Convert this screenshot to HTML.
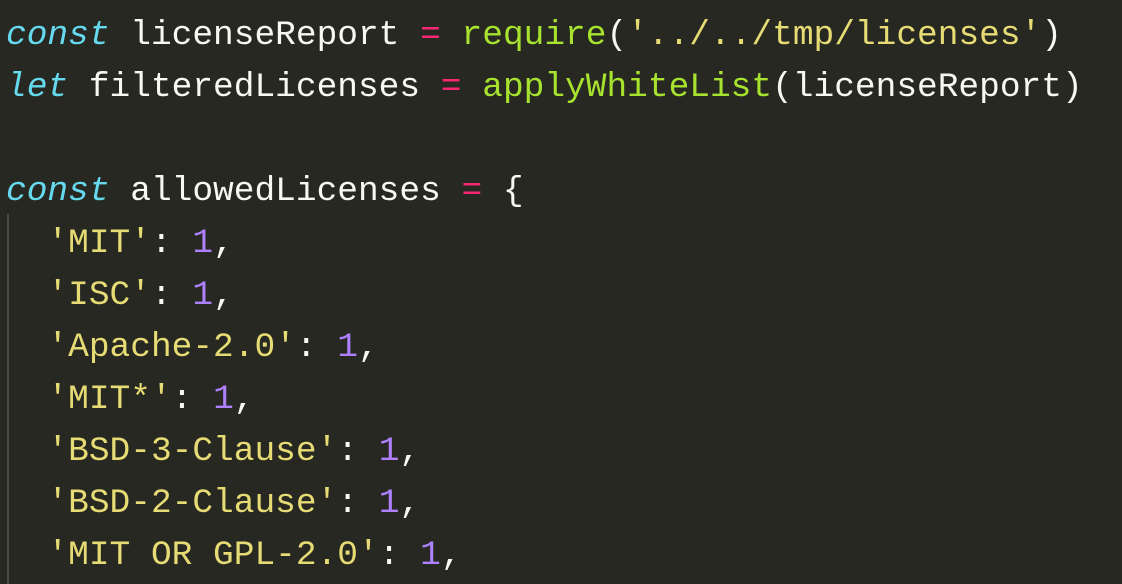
<!DOCTYPE html>
<html><head><meta charset="utf-8"><style>
html,body{margin:0;padding:0;}
body{width:1122px;height:584px;background:#272822;overflow:hidden;position:relative;}
pre{margin:0;position:absolute;left:6px;top:10px;font-family:"Liberation Mono",monospace;font-size:34.5px;line-height:52px;color:#f8f8f2;white-space:pre;}
.k{color:#66d9ef;font-style:italic}
.o{color:#f92672}
.f{color:#a6e22e}
.s{color:#e6db74}
.n{color:#ae81ff}
.guide{position:absolute;left:7px;top:214px;width:2px;height:370px;background:#4a4b44;}
</style></head><body>
<div class="guide"></div>
<pre><span class="k">const</span> licenseReport <span class="o">=</span> <span class="f">require</span>(<span class="s">'../../tmp/licenses'</span>)
<span class="k">let</span> filteredLicenses <span class="o">=</span> <span class="f">applyWhiteList</span>(licenseReport)

<span class="k">const</span> allowedLicenses <span class="o">=</span> {
  <span class="s">'MIT'</span>: <span class="n">1</span>,
  <span class="s">'ISC'</span>: <span class="n">1</span>,
  <span class="s">'Apache-2.0'</span>: <span class="n">1</span>,
  <span class="s">'MIT*'</span>: <span class="n">1</span>,
  <span class="s">'BSD-3-Clause'</span>: <span class="n">1</span>,
  <span class="s">'BSD-2-Clause'</span>: <span class="n">1</span>,
  <span class="s">'MIT OR GPL-2.0'</span>: <span class="n">1</span>,
</pre>
</body></html>
